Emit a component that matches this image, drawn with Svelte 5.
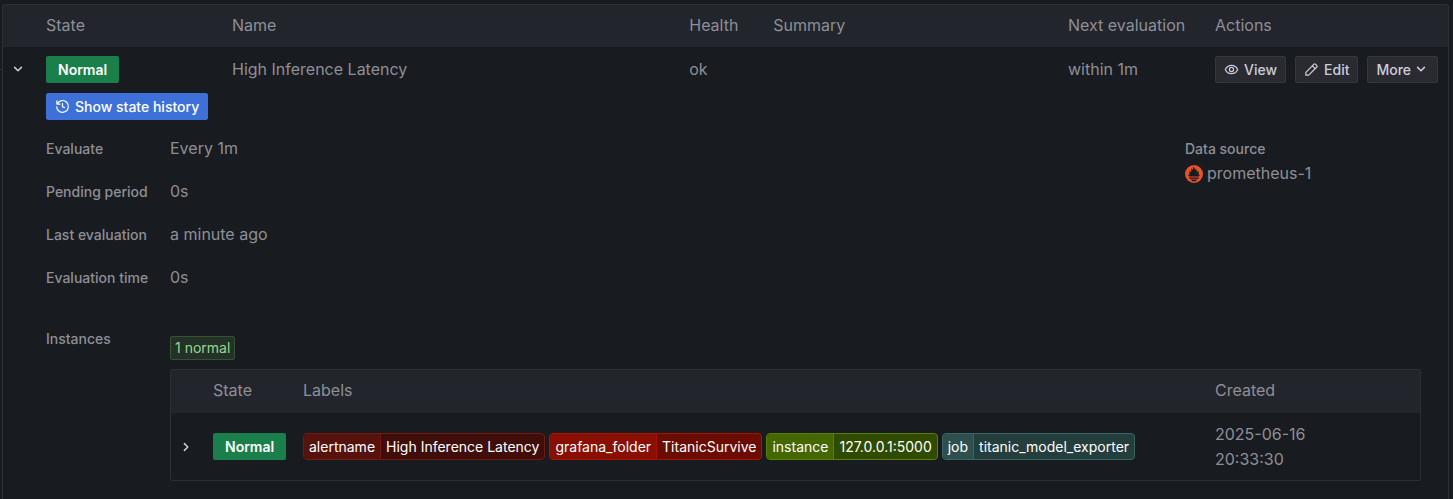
<script>
  const rule = {
    state: 'Normal',
    name: 'High Inference Latency',
    health: 'ok',
    summary: '',
    next: 'within 1m'
  };

  const details = [
    ['Evaluate', 'Every 1m'],
    ['Pending period', '0s'],
    ['Last evaluation', 'a minute ago'],
    ['Evaluation time', '0s']
  ];

  const labels = [
    { key: 'alertname', value: 'High Inference Latency', tone: 'maroon' },
    { key: 'grafana_folder', value: 'TitanicSurvive', tone: 'red' },
    { key: 'instance', value: '127.0.0.1:5000', tone: 'olive' },
    { key: 'job', value: 'titanic_model_exporter', tone: 'teal' }
  ];

  let open = $state(true);
  let instanceOpen = $state(false);
</script>

{#snippet chevron(down)}
  <svg class="chevron" viewBox="0 0 16 16" aria-hidden="true">
    <path d={down ? 'M4.6 6.4 8 9.8l3.4-3.4' : 'M6.4 4.6 9.8 8l-3.4 3.4'} />
  </svg>
{/snippet}

<main>
  <div class="panel">
    <table class="rules">
      <colgroup>
        <col class="c-toggle" /><col class="c-state" /><col /><col class="c-health" />
        <col class="c-summary" /><col class="c-next" /><col class="c-actions" />
      </colgroup>
      <thead>
        <tr>
          <th></th>
          <th>State</th>
          <th>Name</th>
          <th>Health</th>
          <th>Summary</th>
          <th>Next evaluation</th>
          <th>Actions</th>
        </tr>
      </thead>
      <tbody>
        <tr class="rule">
          <td class="toggle">
            <button class="expand" aria-label="Toggle rule details" aria-expanded={open} onclick={() => (open = !open)}>
              {@render chevron(open)}
            </button>
          </td>
          <td><span class="state">{rule.state}</span></td>
          <td>{rule.name}</td>
          <td>{rule.health}</td>
          <td>{rule.summary}</td>
          <td>{rule.next}</td>
          <td>
            <div class="actions">
              <a class="btn" href="#view">
                <svg viewBox="0 0 16 16" aria-hidden="true">
                  <path d="M1.4 8C2.7 5.1 5.1 3.5 8 3.5S13.300 5.100 14.600 8C13.300 10.900 10.900 12.500 8 12.500S2.700 10.900 1.400 8Z" />
                  <circle cx="8" cy="8" r="2.200" />
                </svg>
                View
              </a>
              <a class="btn" href="#edit">
                <svg viewBox="0 0 16 16" aria-hidden="true">
                  <path d="M2 14v-3L10.700 2.300a1 1 0 0 1 1.400 0l1.600 1.600a1 1 0 0 1 0 1.400L5 14ZM8.900 4.100l3 3" />
                </svg>
                Edit
              </a>
              <button class="btn more">More {@render chevron(true)}</button>
            </div>
          </td>
        </tr>
        {#if open}
          <tr>
            <td></td>
            <td colspan="6" class="expanded">
              <button class="btn primary">
                <svg viewBox="0 0 16 16" aria-hidden="true">
                  <path d="M2 2v3.400h3.400M2.300 5.200A6.300 6.300 0 1 1 1.700 8.300M8 5v3.200l2 1" />
                </svg>
                Show state history
              </button>
              <div class="columns">
                <dl class="details">
                  {#each details as [term, value]}
                    <div>
                      <dt>{term}</dt>
                      <dd>{value}</dd>
                    </div>
                  {/each}
                </dl>
                <dl class="source">
                  <dt>Data source</dt>
                  <dd>
                    <svg viewBox="0 0 18 18" aria-hidden="true">
                      <circle cx="9" cy="9" r="9" fill="#e6522c" />
                      <path
                        fill="#181b1f"
                        d="M3.100 9.500c.6.300 1.200.500 1.600.500C4 8.400 4.300 6.900 5 5.500c.1 1 .5 1.700 1 2C6.400 5.800 5.900 4.600 6.900 3c.1 1 .4 1.500.9 1.900C8 3.800 8.100 2.600 8.900 1.200c.1 1.800 1.400 2.500 1.600 4.300.4-.5.5-1 .4-1.900 1.100 1.200.7 2.600 1.100 3.800.5-.5.8-1.200.8-1.900.9 1.400 1.300 3 .6 4.500.5 0 1-.2 1.500-.5-.2 1-.7 1.600-1.200 2.100H4.300c-.6-.5-1-1.100-1.200-2.100ZM4.200 12.400h9.600v1.400H4.200ZM6 14.600h6c-.3 1.300-1.500 2-3 2s-2.700-.7-3-2Z"
                      />
                    </svg>
                    prometheus-1
                  </dd>
                </dl>
              </div>
              <div class="instances">
                <h2>Instances</h2>
                <div class="matches">
                  <span class="count">1 normal</span>
                  <div class="box">
                    <table>
                      <colgroup>
                        <col class="c-toggle" /><col class="c-instance" /><col /><col class="c-created" />
                      </colgroup>
                      <thead>
                        <tr><th></th><th>State</th><th>Labels</th><th>Created</th></tr>
                      </thead>
                      <tbody>
                        <tr class="instance">
                          <td class="toggle">
                            <button
                              class="expand"
                              aria-label="Toggle instance details"
                              aria-expanded={instanceOpen}
                              onclick={() => (instanceOpen = !instanceOpen)}
                            >
                              {@render chevron(instanceOpen)}
                            </button>
                          </td>
                          <td><span class="state">Normal</span></td>
                          <td>
                            <ul class="labels">
                              {#each labels as label}
                                <li class={label.tone}><span>{label.key}</span><span>{label.value}</span></li>
                              {/each}
                            </ul>
                          </td>
                          <td><time datetime="2025-06-16T20:33:30">2025-06-16 20:33:30</time></td>
                        </tr>
                      </tbody>
                    </table>
                  </div>
                </div>
              </div>
            </td>
          </tr>
        {/if}
      </tbody>
    </table>
  </div>
</main>

<style>
  :global(body) {
    background: #181b1f;
  }
  main {
    padding: 4px 4px 0 2px;
    color: #8e8f98;
    font: 16px/25px Inter, sans-serif;
  }
  * {
    box-sizing: border-box;
  }
  .panel {
    position: relative;
    border: 1px solid #2c2f34;
    border-radius: 2px;
  }
  .panel::before {
    content: '';
    position: absolute;
    left: -3px;
    top: 64px;
    width: 2px;
    height: 1px;
    background: #2c2f34;
  }
  table {
    width: 100%;
    table-layout: fixed;
    border-collapse: collapse;
  }
  .c-toggle { width: 34px; }
  .c-state { width: 186px; }
  .c-health { width: 84px; }
  .c-summary { width: 20.4%; }
  .c-next { width: 147px; }
  .c-actions { width: 242px; }
  .box .c-toggle { width: 33px; }
  .c-instance { width: 90px; }
  .c-created { width: 214px; }
  th,
  td {
    padding: 0 9px;
    text-align: left;
    font-weight: 400;
  }
  th {
    height: 42px;
    padding-bottom: 2px;
    background: #22252b;
    white-space: nowrap;
  }
  .box th {
    height: 43px;
  }
  .rule td {
    height: 46px;
    padding-bottom: 2px;
  }
  td.toggle {
    padding-left: 7px;
    padding-right: 7px;
  }
  .expand {
    display: flex;
    padding: 0;
    border: 0;
    background: none;
    color: #ccccdc;
    cursor: pointer;
  }
  svg {
    flex: none;
    width: 15px;
    height: 15px;
    fill: none;
    stroke: currentColor;
    stroke-width: 1.3;
    stroke-linecap: round;
    stroke-linejoin: round;
  }
  .chevron {
    width: 16px;
    height: 16px;
    stroke-width: 1.5;
  }
  .state {
    display: block;
    width: fit-content;
    padding: 0 12px;
    border-radius: 2px;
    background: #1a7f4b;
    color: #fff;
    font-size: 14px;
    font-weight: 600;
    line-height: 27px;
  }
  .actions {
    display: flex;
    gap: 9px;
  }
  .btn {
    display: inline-flex;
    align-items: center;
    gap: 5px;
    height: 27px;
    padding: 0 8px;
    border: 1px solid #36373d;
    border-radius: 2px;
    background: #2a2b30;
    color: #ccccdc;
    font: 500 14px/25px Inter, sans-serif;
    text-decoration: none;
    white-space: nowrap;
    cursor: pointer;
  }
  .btn.more {
    gap: 2px;
  }
  .btn.primary {
    border-color: #3d71d9;
    background: #3d71d9;
    color: #fff;
  }
  td.expanded {
    padding-right: 27px;
    padding-bottom: 27px;
  }
  .columns {
    display: flex;
    justify-content: space-between;
    padding-top: 15px;
  }
  dl,
  dd,
  h2 {
    margin: 0;
  }
  .details {
    display: flex;
    flex-direction: column;
    gap: 18px;
  }
  .details div,
  .instances {
    display: grid;
    grid-template-columns: 124px 1fr;
  }
  dt,
  h2 {
    font-size: 14px;
    font-weight: 500;
    line-height: 25px;
  }
  .source {
    width: 236px;
  }
  .source dd {
    display: flex;
    align-items: center;
    gap: 4px;
  }
  .source svg {
    width: 18px;
    height: 18px;
    stroke: none;
  }
  .instances {
    padding-top: 36px;
  }
  .matches {
    display: flex;
    flex-direction: column;
    align-items: flex-start;
    gap: 9px;
    padding-top: 10px;
  }
  .count {
    padding: 0 4px;
    border: 1px solid #35532f;
    border-radius: 2px;
    background: #243129;
    color: #96d98d;
    font-size: 14px;
    line-height: 22px;
  }
  .box {
    width: 100%;
    border: 1px solid #2c2f34;
    border-radius: 2px;
  }
  .instance td {
    height: 67px;
  }
  time {
    display: block;
    width: 96px;
  }
  .labels {
    display: flex;
    flex-wrap: wrap;
    gap: 4px;
    margin: 0;
    padding: 0;
    list-style: none;
    color: #fff;
    font-size: 14px;
    line-height: 25px;
    white-space: nowrap;
  }
  .labels li {
    display: flex;
    border: 1px solid var(--line);
    border-radius: 4px;
    background: var(--value);
  }
  .labels span {
    padding: 0 5px;
  }
  .labels span:first-child {
    border-right: 1px solid var(--line);
    border-radius: 3px 0 0 3px;
    background: var(--key);
  }
  .maroon { --key: #56120d; --value: #400e0a; --line: #75180f; }
  .red { --key: #890f02; --value: #6b0c02; --line: #a81203; }
  .olive { --key: #446700; --value: #304a00; --line: #587f06; }
  .teal { --key: #2f4f4f; --value: #243e3e; --line: #3b6464; }
</style>
